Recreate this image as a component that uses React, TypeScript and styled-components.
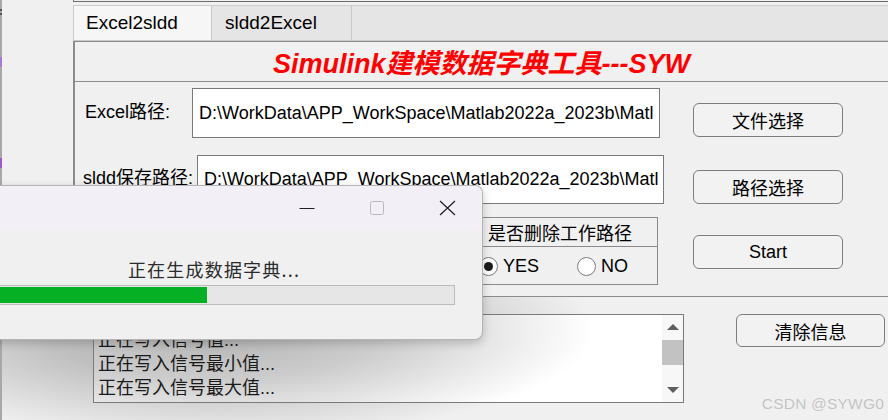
import styled, { createGlobalStyle } from 'styled-components';

const GlobalStyle = createGlobalStyle`
  html, body {
    margin: 0;
    padding: 0;
    background: #f0f0f0;
  }
  body {
    width: 888px;
    height: 420px;
    overflow: hidden;
    font-family: "Liberation Sans", "Noto Sans CJK SC", sans-serif;
  }
`;

const FONT = `"Liberation Sans", "Noto Sans CJK SC", sans-serif`;

// soft shadow of the progress window, centred on it; x/y = page origin of the painted box
const shadowAt = (x: number, y: number) =>
  `radial-gradient(ellipse 380px 110px at ${214 - x}px ${330 - y}px, rgba(0, 0, 0, 0.3) 0%, rgba(0, 0, 0, 0.2) 45%, rgba(0, 0, 0, 0.07) 80%, rgba(0, 0, 0, 0) 100%)`;

const Screen = styled.div`
  position: relative;
  width: 888px;
  height: 420px;
  overflow: hidden;
  display: flex;
  background: #f0f0f0;
  color: #000;
  font-family: ${FONT};
`;

const SideStrip = styled.div`
  flex: none;
  width: 73px;
  box-sizing: border-box;
  border-left: 2px solid #a8a8a8;
  display: flex;
  flex-direction: column;
  background: ${shadowAt(2, 0)};
`;

const SideMark = styled.span<{ $top: number; $h: number; $color: string }>`
  display: block;
  width: 2px;
  margin-left: -2px;
  margin-top: ${(p) => p.$top}px;
  height: ${(p) => p.$h}px;
  background: ${(p) => p.$color};
`;

const Main = styled.div`
  flex: 1;
  min-width: 0;
  display: flex;
  flex-direction: column;
`;

const TopEdge = styled.div`
  height: 2px;
  box-sizing: border-box;
  border-left: 1px solid #7a7a7a;
  border-bottom: 1px solid #6c6c6c;
  margin-bottom: 3px;
`;

const TabBar = styled.div`
  height: 36px;
  box-sizing: border-box;
  display: flex;
  background: #e5e5e5;
  border-top: 1px solid #cdcdcd;
  border-bottom: 1px solid #c8c8c8;
`;

const Tab = styled.div<{ $active?: boolean; $w: number; $first?: boolean }>`
  width: ${(p) => p.$w}px;
  box-sizing: border-box;
  display: flex;
  align-items: center;
  padding-left: ${(p) => (p.$first ? 12 : 13)}px;
  font-size: 19px;
  background: ${(p) => (p.$active ? '#f6f6f6' : '#e5e5e5')};
  border-left: ${(p) => (p.$first ? '1px solid #c9c9c9' : 'none')};
  border-right: 1px solid #c9c9c9;
`;

const Panel = styled.div`
  display: flex;
  flex-direction: column;
  border-top: 1px solid #8c8c8c;
  border-left: 2px solid #8c8c8c;
  border-bottom: 1px solid #8c8c8c;
  background: #f0f0f0;
`;

const TitleRow = styled.div`
  height: 40px;
  box-sizing: border-box;
  border-bottom: 1px solid #8c8c8c;
  display: flex;
  align-items: center;
  justify-content: center;
  font-size: 27px;
  font-weight: bold;
  font-style: italic;
  color: #ff0000;
`;

const FormBody = styled.div`
  display: flex;
  flex-direction: column;
  padding: 6px 0 11px 0;
`;

const Row = styled.div<{ $pl: number; $h: number; $mt?: number }>`
  display: flex;
  align-items: flex-end;
  height: ${(p) => p.$h}px;
  padding-left: ${(p) => p.$pl}px;
  margin-top: ${(p) => p.$mt ?? 0}px;
`;

const Label = styled.div<{ $w: number }>`
  width: ${(p) => p.$w}px;
  align-self: center;
  margin-bottom: 3px;
  font-size: 18px;
  line-height: 22px;
  white-space: nowrap;
`;

const PathBox = styled.div<{ $w: number }>`
  width: ${(p) => p.$w}px;
  height: 100%;
  box-sizing: border-box;
  background: #fff;
  border: 1px solid #7a7a7a;
  padding-left: 6px;
  display: flex;
  align-items: center;
  font-size: 18px;
  white-space: nowrap;
  overflow: hidden;
`;

const Button = styled.div<{ $ml: number; $mb?: number; $w?: number; $h?: number }>`
  width: ${(p) => p.$w ?? 150}px;
  height: ${(p) => p.$h ?? 34}px;
  margin-left: ${(p) => p.$ml}px;
  margin-bottom: ${(p) => p.$mb ?? 0}px;
  box-sizing: border-box;
  border: 1px solid #7d7d7d;
  border-radius: 6px;
  background: #f2f2f2;
  display: flex;
  align-items: center;
  justify-content: center;
  font-size: 18px;
  flex: none;
`;

const GroupBox = styled.div`
  width: 188px;
  height: 68px;
  box-sizing: border-box;
  border: 1px solid #8a8a8a;
  display: flex;
  flex-direction: column;
  flex: none;
`;

const GroupHeader = styled.div`
  height: 29px;
  box-sizing: border-box;
  border-bottom: 1px solid #8a8a8a;
  padding-left: 17px;
  display: flex;
  align-items: center;
  font-size: 18px;
`;

const RadioRow = styled.div`
  flex: 1;
  display: flex;
  align-items: center;
  padding-left: 8px;
  padding-top: 2px;
`;

const RadioItem = styled.div<{ $ml?: number }>`
  display: flex;
  align-items: center;
  gap: 5px;
  margin-left: ${(p) => p.$ml ?? 0}px;
  font-size: 18px;
`;

const RadioCircle = styled.span<{ $on?: boolean }>`
  width: 19px;
  height: 19px;
  box-sizing: border-box;
  border-radius: 50%;
  border: 1px solid #7a7a7a;
  background: #fff;
  display: flex;
  align-items: center;
  justify-content: center;
  &::after {
    content: '';
    width: 9px;
    height: 9px;
    border-radius: 50%;
    background: ${(p) => (p.$on ? '#1b1b1b' : 'transparent')};
  }
`;

const BottomRow = styled.div`
  flex: 1;
  display: flex;
  align-items: flex-start;
  padding: 17px 0 0 20px;
  background: ${shadowAt(73, 297)};
`;

const LogBox = styled.div`
  width: 591px;
  height: 89px;
  box-sizing: border-box;
  border: 1px solid #7a7a7a;
  background: ${shadowAt(94, 315)}, #fff;
  display: flex;
`;

const LogText = styled.div`
  flex: 1;
  padding: 13px 0 0 4px;
  font-size: 18px;
  line-height: 24px;
  color: #1a1a1a;
  overflow: hidden;
  white-space: nowrap;
`;

const ScrollBar = styled.div`
  width: 21px;
  display: flex;
  flex-direction: column;
  background: #f7f7f7;
`;

const ScrollArrow = styled.div<{ $up?: boolean }>`
  height: 24px;
  display: flex;
  align-items: center;
  justify-content: center;
  &::after {
    content: '';
    border-left: 6px solid transparent;
    border-right: 6px solid transparent;
    ${(p) => (p.$up ? 'border-bottom: 6px solid #5e5e5e;' : 'border-top: 6px solid #5e5e5e;')}
  }
`;

const ScrollThumb = styled.div`
  height: 25px;
  margin-top: 1px;
  background: #c2c2c2;
`;

const ScrollTrack = styled.div`
  flex: 1;
`;

const Dialog = styled.div`
  position: absolute;
  left: -55px;
  top: 185px;
  width: 538px;
  height: 155px;
  box-sizing: border-box;
  border: 1px solid rgba(0, 0, 0, 0.25);
  border-radius: 8px;
  background: #f0f0f0;
  overflow: hidden;
  box-shadow: 0 3px 10px rgba(0, 0, 0, 0.2);
  display: flex;
  flex-direction: column;
  z-index: 5;
`;

const DialogTitle = styled.div`
  height: 43px;
  flex: none;
  background: #f3eff7;
  display: flex;
  justify-content: flex-end;
`;

const CaptionButton = styled.div`
  width: 70px;
  display: flex;
  align-items: center;
  justify-content: center;
`;

const DialogBody = styled.div`
  flex: 1;
  display: flex;
  flex-direction: column;
  align-items: center;
  padding-top: 28px;
`;

const DialogText = styled.div`
  font-family: "Noto Sans CJK SC", sans-serif;
  font-size: 18px;
  line-height: 24px;
  color: #2b2b2b;
  letter-spacing: 1.2px;
`;

const Progress = styled.div`
  align-self: stretch;
  margin: 4px 27px 0 27px;
  height: 20px;
  box-sizing: border-box;
  border: 1px solid #bcbcbc;
  background: #e6e6e6;
  padding: 1px 0;
  display: flex;
`;

const ProgressFill = styled.div<{ $pct: number }>`
  width: ${(p) => p.$pct}%;
  background: #06b025;
`;

const Watermark = styled.div`
  position: absolute;
  right: 4px;
  bottom: 7px;
  font-size: 15.5px;
  line-height: 18px;
  color: #c2c2c2;
  text-shadow: 0 0 1px #ffffff;
  letter-spacing: 0.2px;
`;

const PATH = 'D:\\WorkData\\APP_WorkSpace\\Matlab2022a_2023b\\Matl';

export default function App() {
  return (
    <Screen>
      <GlobalStyle />
      <SideStrip>
        <SideMark $top={9} $h={2} $color="#555" />
        <SideMark $top={2} $h={2} $color="#555" />
        <SideMark $top={42} $h={10} $color="#a77ad6" />
        <SideMark $top={91} $h={10} $color="#9b59d0" />
      </SideStrip>
      <Main>
        <TopEdge />
        <TabBar>
          <Tab $active $first $w={139}>Excel2sldd</Tab>
          <Tab $w={140}>sldd2Excel</Tab>
        </TabBar>
        <Panel>
          <TitleRow>Simulink建模数据字典工具---SYW</TitleRow>
          <FormBody>
            <Row $pl={10} $h={50}>
              <Label $w={107}>Excel路径:</Label>
              <PathBox $w={468}>{PATH}</PathBox>
              <Button $ml={33} $mb={1}>文件选择</Button>
            </Row>
            <Row $pl={8} $h={49} $mt={17}>
              <Label $w={114}>sldd保存路径:</Label>
              <PathBox $w={467}>{PATH}</PathBox>
              <Button $ml={29}>路径选择</Button>
            </Row>
            <Row $pl={395} $h={68} $mt={13}>
              <GroupBox>
                <GroupHeader>是否删除工作路径</GroupHeader>
                <RadioRow>
                  <RadioItem>
                    <RadioCircle $on />
                    YES
                  </RadioItem>
                  <RadioItem $ml={38}>
                    <RadioCircle />
                    NO
                  </RadioItem>
                </RadioRow>
              </GroupBox>
              <Button $ml={35} $mb={16}>Start</Button>
            </Row>
          </FormBody>
        </Panel>
        <BottomRow>
          <LogBox>
            <LogText>
              <div>正在写入信号值...</div>
              <div>正在写入信号最小值...</div>
              <div>正在写入信号最大值...</div>
            </LogText>
            <ScrollBar>
              <ScrollArrow $up />
              <ScrollThumb />
              <ScrollTrack />
              <ScrollArrow />
            </ScrollBar>
          </LogBox>
          <Button $ml={52} $w={149} $h={33}>清除信息</Button>
        </BottomRow>
      </Main>

      <Dialog>
        <DialogTitle>
          <CaptionButton>
            <svg width="16" height="16" viewBox="0 0 16 16">
              <line x1="0.5" y1="8.5" x2="15.5" y2="8.5" stroke="#1f1f1f" strokeWidth="1" />
            </svg>
          </CaptionButton>
          <CaptionButton>
            <svg width="16" height="16" viewBox="0 0 16 16">
              <rect x="1.5" y="1.5" width="13" height="13" rx="2" fill="none" stroke="#b8b8b8" strokeWidth="1" />
            </svg>
          </CaptionButton>
          <CaptionButton>
            <svg width="17" height="16" viewBox="0 0 17 16">
              <path d="M1 1 L16 15 M16 1 L1 15" stroke="#1f1f1f" strokeWidth="1.2" fill="none" />
            </svg>
          </CaptionButton>
        </DialogTitle>
        <DialogBody>
          <DialogText>正在生成数据字典...</DialogText>
          <Progress>
            <ProgressFill $pct={48.6} />
          </Progress>
        </DialogBody>
      </Dialog>

      <Watermark>CSDN @SYWG0</Watermark>
    </Screen>
  );
}
